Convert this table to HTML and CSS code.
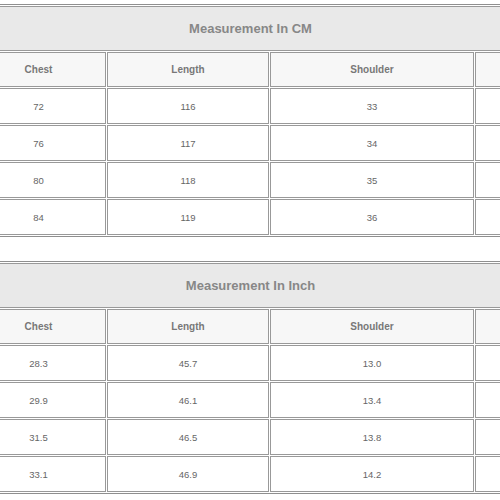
FILE: index.html
```html
<!DOCTYPE html>
<html>
<head>
<meta charset="utf-8">
<link rel="stylesheet" href="styles.css">
</head>
<body>
<div class="page">
  <table class="size-table">
    <colgroup>
      <col class="c1"><col class="c2"><col class="c3"><col class="c4">
    </colgroup>
    <tr><td class="title" colspan="4">Measurement In CM</td></tr>
    <tr class="head"><td>Chest</td><td>Length</td><td>Shoulder</td><td></td></tr>
    <tr><td>72</td><td>116</td><td>33</td><td></td></tr>
    <tr><td>76</td><td>117</td><td>34</td><td></td></tr>
    <tr><td>80</td><td>118</td><td>35</td><td></td></tr>
    <tr><td>84</td><td>119</td><td>36</td><td></td></tr>
  </table>
  <table class="size-table">
    <colgroup>
      <col class="c1"><col class="c2"><col class="c3"><col class="c4">
    </colgroup>
    <tr><td class="title" colspan="4">Measurement In Inch</td></tr>
    <tr class="head"><td>Chest</td><td>Length</td><td>Shoulder</td><td></td></tr>
    <tr><td>28.3</td><td>45.7</td><td>13.0</td><td></td></tr>
    <tr><td>29.9</td><td>46.1</td><td>13.4</td><td></td></tr>
    <tr><td>31.5</td><td>46.5</td><td>13.8</td><td></td></tr>
    <tr><td>33.1</td><td>46.9</td><td>14.2</td><td></td></tr>
  </table>
</div>
</body>
</html>
```
FILE: styles.css
```css
html, body {
  margin: 0;
  padding: 0;
  background: #ffffff;
}
.page {
  width: 500px;
  overflow: hidden;
  padding-top: 4px;
  display: flex;
  flex-direction: column;
  gap: 24px;
  font-family: "Liberation Sans", Arial, sans-serif;
}
.size-table {
  margin-left: -31px;
  width: 563px;
  table-layout: fixed;
  border-collapse: separate;
  border-spacing: 1px;
  border: 1px solid #8f8f8f;
}
.c1 { width: 135px; }
.c2 { width: 162px; }
.c3 { width: 204px; }
.c4 { width: 55px; }
.size-table td {
  border: 1px solid #999999;
  height: 34px;
  padding: 0;
  text-align: center;
  vertical-align: middle;
  font-size: 9.5px;
  color: #666666;
  background: #ffffff;
}
.size-table td.title {
  height: 43px;
  background: #e9e9e9;
  color: #878787;
  font-size: 13px;
  font-weight: bold;
}
.size-table tr.head td {
  height: 33px;
  background: #f7f7f7;
  color: #777777;
  font-size: 10px;
  font-weight: bold;
}
```
